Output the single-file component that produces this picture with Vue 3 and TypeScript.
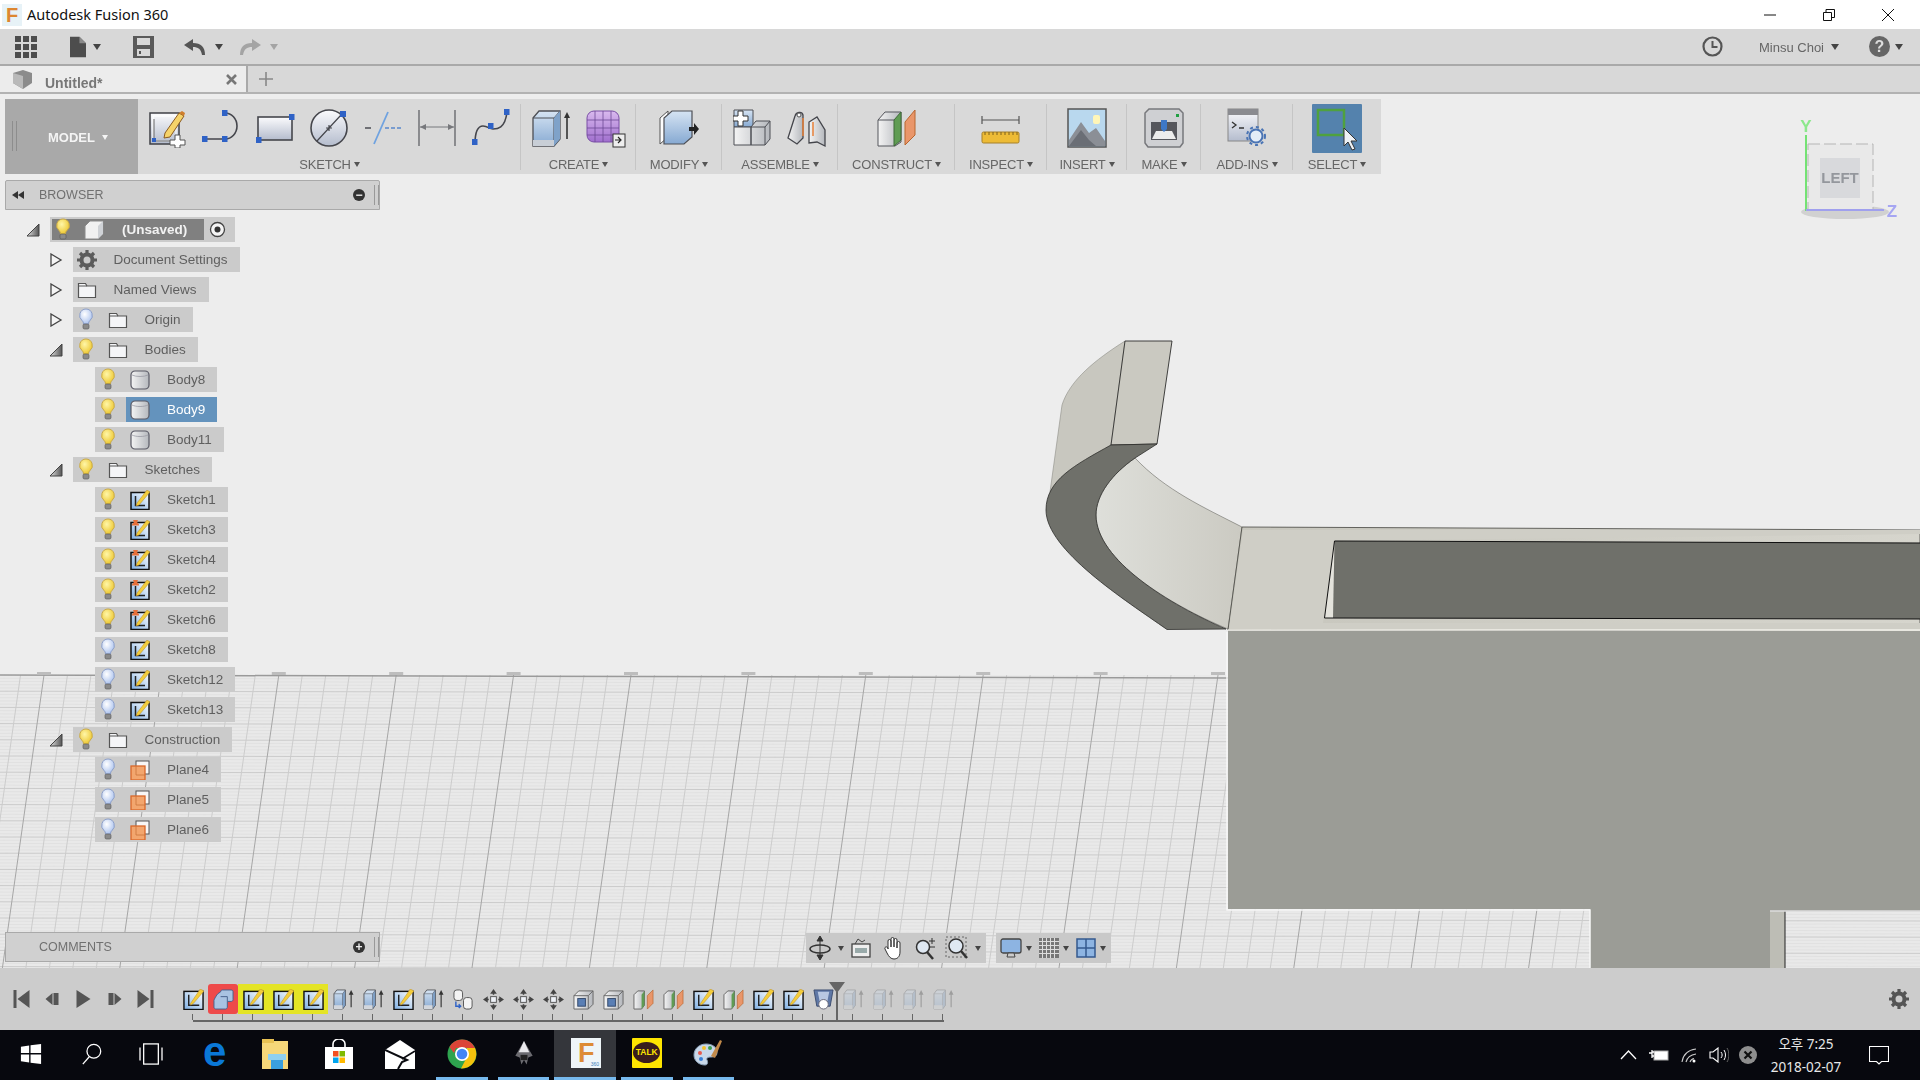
<script setup lang="ts">
interface TreeRow {
  label: string
  level: number
  arrow?: 'open' | 'closed'
  bulb?: 'on' | 'off'
  icon: string
  selected?: boolean
}

const tree: TreeRow[] = [
  { label: 'Document Settings', level: 1, arrow: 'closed', icon: 'n-gear' },
  { label: 'Named Views', level: 1, arrow: 'closed', icon: 'n-folder' },
  { label: 'Origin', level: 1, arrow: 'closed', bulb: 'off', icon: 'n-folder' },
  { label: 'Bodies', level: 1, arrow: 'open', bulb: 'on', icon: 'n-folder' },
  { label: 'Body8', level: 2, bulb: 'on', icon: 'n-body' },
  { label: 'Body9', level: 2, bulb: 'on', icon: 'n-body', selected: true },
  { label: 'Body11', level: 2, bulb: 'on', icon: 'n-body' },
  { label: 'Sketches', level: 1, arrow: 'open', bulb: 'on', icon: 'n-folder' },
  { label: 'Sketch1', level: 2, bulb: 'on', icon: 'n-sketch' },
  { label: 'Sketch3', level: 2, bulb: 'on', icon: 'n-sketch-warn' },
  { label: 'Sketch4', level: 2, bulb: 'on', icon: 'n-sketch-warn' },
  { label: 'Sketch2', level: 2, bulb: 'on', icon: 'n-sketch-warn' },
  { label: 'Sketch6', level: 2, bulb: 'on', icon: 'n-sketch-warn' },
  { label: 'Sketch8', level: 2, bulb: 'off', icon: 'n-sketch' },
  { label: 'Sketch12', level: 2, bulb: 'off', icon: 'n-sketch' },
  { label: 'Sketch13', level: 2, bulb: 'off', icon: 'n-sketch' },
  { label: 'Construction', level: 1, arrow: 'open', bulb: 'on', icon: 'n-folder' },
  { label: 'Plane4', level: 2, bulb: 'off', icon: 'n-plane' },
  { label: 'Plane5', level: 2, bulb: 'off', icon: 'n-plane' },
  { label: 'Plane6', level: 2, bulb: 'off', icon: 'n-plane' }
]

const ribbon = [
  { label: 'SKETCH', width: 383, icons: ['r-sketch', 'r-arc', 'r-rect', 'r-circle', 'r-trim', 'r-dim', 'r-spline'] },
  { label: 'CREATE', width: 115, icons: ['r-extrude', 'r-form'] },
  { label: 'MODIFY', width: 86, icons: ['r-press'] },
  { label: 'ASSEMBLE', width: 116, icons: ['r-component', 'r-joint'] },
  { label: 'CONSTRUCT', width: 117, icons: ['r-construct'] },
  { label: 'INSPECT', width: 92, icons: ['r-measure'] },
  { label: 'INSERT', width: 80, icons: ['r-insert'] },
  { label: 'MAKE', width: 74, icons: ['r-make'] },
  { label: 'ADD-INS', width: 92, icons: ['r-addins'] }
]

const timeline = [
  { icon: 't-sketch' },
  { icon: 't-copy', mark: 'red' },
  { icon: 't-sketch', mark: 'yellow' },
  { icon: 't-sketch', mark: 'yellow' },
  { icon: 't-sketch', mark: 'yellow' },
  { icon: 't-extrude' },
  { icon: 't-extrude' },
  { icon: 't-sketch' },
  { icon: 't-extrude' },
  { icon: 't-joint' },
  { icon: 't-move' },
  { icon: 't-move' },
  { icon: 't-move' },
  { icon: 't-box' },
  { icon: 't-box' },
  { icon: 't-plane' },
  { icon: 't-plane' },
  { icon: 't-sketch' },
  { icon: 't-plane' },
  { icon: 't-sketch' },
  { icon: 't-sketch' },
  { icon: 't-shield' },
  { icon: 't-extrude', ghost: true },
  { icon: 't-extrude', ghost: true },
  { icon: 't-extrude', ghost: true },
  { icon: 't-extrude', ghost: true }
]

const taskButtons = [
  { icon: 'b-win' },
  { icon: 'b-search' },
  { icon: 'b-task' },
  { icon: 'b-edge' },
  { icon: 'b-files' },
  { icon: 'b-store' },
  { icon: 'b-mail' },
  { icon: 'b-chrome', open: true },
  { icon: 'b-ink', open: true },
  { icon: 'b-fusion', open: true, active: true },
  { icon: 'b-talk', open: true },
  { icon: 'b-paint', open: true }
]

// ground grid, leaning towards the left as it gets nearer
const horizon = 675
const bottom = 968
const lean = 0.142
const gridV: { x1: number; x2: number; major: boolean }[] = []
for (let i = -5; i < 75; i++) {
  const x = 44 + i * 23.48
  gridV.push({ x1: x, x2: x - (bottom - horizon) * lean, major: i % 5 === 0 })
}
const gridH: { y: number; major: boolean }[] = []
for (let i = 1; i * 3.24 < bottom - horizon; i++) {
  gridH.push({ y: horizon + i * 3.24, major: i % 5 === 0 })
}
const ticks = Array.from({ length: 11 }, (_, i) => 44 + i * 117.4)
</script>

<template>
  <div class="app">
    <svg class="defs" aria-hidden="true">
      <defs>
        <linearGradient id="gBlue" x1="0" y1="0" x2="0" y2="1"><stop offset="0" stop-color="#d6e4f3" /><stop offset="1" stop-color="#86a9d2" /></linearGradient>
        <linearGradient id="gSheet" x1="0" y1="0" x2="0" y2="1"><stop offset="0" stop-color="#fbfbfd" /><stop offset="1" stop-color="#b4bccd" /></linearGradient>
        <linearGradient id="gSky" x1="1" y1="0" x2="0" y2="1"><stop offset="0" stop-color="#ffffff" /><stop offset="1" stop-color="#7fb0e4" /></linearGradient>
        <linearGradient id="gPurple" x1="0" y1="0" x2="0" y2="1"><stop offset="0" stop-color="#d9b9ee" /><stop offset="1" stop-color="#a06fce" /></linearGradient>
        <linearGradient id="gGrey" x1="0" y1="0" x2="1" y2="0"><stop offset="0" stop-color="#f4f4f4" /><stop offset="1" stop-color="#b5b8bd" /></linearGradient>
        <linearGradient id="gTri" x1="0" y1="0" x2="1" y2="0"><stop offset="0" stop-color="#e0e0e0" /><stop offset="1" stop-color="#555" /></linearGradient>
        <radialGradient id="gOn" cx="0.4" cy="0.35" r="0.7"><stop offset="0" stop-color="#fff6a8" /><stop offset="1" stop-color="#ecc52a" /></radialGradient>
        <radialGradient id="gOff" cx="0.4" cy="0.35" r="0.7"><stop offset="0" stop-color="#ffffff" /><stop offset="1" stop-color="#a8c0ee" /></radialGradient>
        <linearGradient id="gFace" x1="0" y1="0" x2="1" y2="0"><stop offset="0" stop-color="#c7c6bd" /><stop offset="1" stop-color="#d6d5cd" /></linearGradient>
        <linearGradient id="gInner" x1="0" y1="0" x2="1" y2="0"><stop offset="0" stop-color="#dedfda" /><stop offset="1" stop-color="#cbcac2" /></linearGradient>
      </defs>

      <!-- tree icons -->
      <symbol id="n-bulb-on" viewBox="0 0 20 24">
        <path d="M10 1a6.5 6.5 0 0 0-4 11.500c1 1 1.500 2 1.500 3.500h5c0-1.500.5-2.500 1.500-3.500A6.500 6.500 0 0 0 10 1z" fill="url(#gOn)" stroke="#c8a94a" />
        <rect x="7" y="16" width="6" height="5" rx="1.500" fill="#8a8a8a" stroke="#555" stroke-width=".6" />
      </symbol>
      <symbol id="n-bulb-off" viewBox="0 0 20 24">
        <path d="M10 1a6.5 6.5 0 0 0-4 11.500c1 1 1.500 2 1.500 3.500h5c0-1.500.5-2.500 1.500-3.500A6.500 6.500 0 0 0 10 1z" fill="url(#gOff)" stroke="#8c9fc9" />
        <rect x="7" y="16" width="6" height="5" rx="1.500" fill="#8a8a8a" stroke="#555" stroke-width=".6" />
      </symbol>
      <symbol id="n-folder" viewBox="0 0 20 20">
        <path d="M1.500 3.500h7l1.500 2.500h8.500v11.500h-17z" fill="#f4f5f7" stroke="#555" stroke-width="1.200" />
        <path d="M1.500 6h8.500" stroke="#555" stroke-width="1" />
      </symbol>
      <symbol id="n-gear" viewBox="0 0 20 20">
        <circle cx="10" cy="10" r="5.500" fill="none" stroke="#5c5c5c" stroke-width="4" />
        <path d="M10 0v4M10 16v4M0 10h4M16 10h4M3 3l3 3M14 14l3 3M17 3l-3 3M6 14l-3 3" stroke="#5c5c5c" stroke-width="3.200" />
      </symbol>
      <symbol id="n-cube" viewBox="0 0 20 20">
        <path d="M1 6l5-5h13v13l-5 5H1z" fill="#f1f1f1" stroke="#8a8a8a" />
        <path d="M14 6v13l5-5V1z" fill="#cfd2d6" />
      </symbol>
      <symbol id="n-body" viewBox="0 0 20 20">
        <rect x="1" y="1" width="18" height="18" rx="4" fill="url(#gGrey)" stroke="#5a5a66" stroke-width="1.200" />
        <path d="M2 5c4 2 12 2 16 0" fill="none" stroke="#9a9aa4" stroke-width=".8" />
      </symbol>
      <symbol id="n-sketch" viewBox="0 0 20 20">
        <rect x="1" y="2.500" width="18" height="17" fill="url(#gSky)" stroke="#111" stroke-width="1.500" />
        <path d="M5.500 6v9.500H15" fill="none" stroke="#222" stroke-width="1.500" />
        <path d="M7 13L17 0l3 2-11 13-3 1z" fill="#f3cd3c" stroke="#b98a25" stroke-width=".5" />
      </symbol>
      <symbol id="n-sketch-warn" viewBox="0 0 20 20">
        <rect x="1" y="2.500" width="18" height="17" fill="url(#gSky)" stroke="#111" stroke-width="1.500" />
        <path d="M5.500 6v9.500H15" fill="none" stroke="#222" stroke-width="1.500" />
        <path d="M7 13L17 0l3 2-11 13-3 1z" fill="#f3cd3c" stroke="#b98a25" stroke-width=".5" />
        <path d="M3 0h5l-1 2 2 2.500v1H2v-1L4 2z" fill="#e8703a" />
      </symbol>
      <symbol id="n-plane" viewBox="0 0 20 20">
        <rect x="6" y="1" width="13" height="13" fill="#f7f7f7" stroke="#555" stroke-width="1" />
        <rect x="1" y="6" width="14" height="14" fill="#f2a66e" stroke="#d9682a" stroke-width="1.300" />
        <path d="M6 6v9h9" fill="none" stroke="#c9733a" stroke-width=".8" />
      </symbol>

      <!-- ribbon icons -->
      <symbol id="r-sketch" viewBox="0 0 40 40">
        <rect x="2" y="5" width="29" height="31" fill="url(#gSheet)" stroke="#3f4046" stroke-width="1.500" />
        <rect x="5" y="8" width="23" height="25" fill="none" stroke="#fff" />
        <path d="M6 11v22h20" fill="none" stroke="#666" />
        <path d="M17 25l14-20 5 3-14 21-6 1z" fill="#f6d36a" stroke="#8a5a20" />
        <path d="M31 5l5 3 1-3-3-2z" fill="#cf7e2c" />
        <rect x="4" y="30" width="4" height="4" fill="#2f62c6" />
        <path d="M27 27h5v5h5v5h-5v3h-5v-3h-5v-5h5z" fill="#fff" stroke="#555" />
      </symbol>
      <symbol id="r-arc" viewBox="0 0 40 40">
        <path d="M3 31h20a12 13 0 0 0 0-26" fill="none" stroke="#45464c" stroke-width="1.600" />
        <rect x="0" y="28" width="5.500" height="6" fill="#2f62c6" /><rect x="20" y="28" width="5.500" height="6" fill="#2f62c6" /><rect x="20" y="2" width="5.500" height="6" fill="#2f62c6" />
      </symbol>
      <symbol id="r-rect" viewBox="0 0 40 40">
        <rect x="2" y="9" width="34" height="23" fill="url(#gSheet)" stroke="#45464c" stroke-width="1.600" />
        <rect x="0" y="29" width="5.500" height="6" fill="#2f62c6" /><rect x="33" y="6" width="5.500" height="6" fill="#2f62c6" />
      </symbol>
      <symbol id="r-circle" viewBox="0 0 40 40">
        <circle cx="19" cy="20" r="18" fill="url(#gSheet)" stroke="#45464c" stroke-width="1.600" />
        <path d="M7 33L31 7M16 20h6M19 17v6" stroke="#45464c" stroke-width="1.200" />
        <rect x="30" y="3" width="6" height="6" fill="#2f62c6" />
      </symbol>
      <symbol id="r-trim" viewBox="0 0 40 40">
        <path d="M1 20h6" stroke="#55565c" stroke-width="1.600" />
        <path d="M10 36L24 4" stroke="#6fa2e0" stroke-width="1.800" />
        <path d="M21 20h17" stroke="#5a88cc" stroke-width="1.600" stroke-dasharray="4 2" />
      </symbol>
      <symbol id="r-dim" viewBox="0 0 40 40">
        <path d="M1 2v36M37 2v36" stroke="#77787c" stroke-width="1.600" />
        <path d="M2 19h34" stroke="#77787c" />
        <path d="M2 19l6-3v6zM36 19l-6-3v6z" fill="#77787c" />
      </symbol>
      <symbol id="r-spline" viewBox="0 0 40 40">
        <path d="M3 36c0-12 3-18 8-18s6 3 10 3 12 0 14-17" fill="none" stroke="#45464c" stroke-width="1.600" />
        <rect x="0" y="31" width="5.500" height="6" fill="#2f62c6" /><rect x="16" y="15" width="5.500" height="6" fill="#2f62c6" /><rect x="32" y="1" width="5.500" height="6" fill="#2f62c6" />
      </symbol>
      <symbol id="r-extrude" viewBox="0 0 40 40">
        <path d="M1 10l6-7h21v28l-6 7H1z" fill="url(#gBlue)" stroke="#4d4f55" stroke-width="1.300" />
        <path d="M1 10h21v28M22 10l6-7" fill="none" stroke="#4d4f55" stroke-width="1" />
        <path d="M22 10l6-7v28l-6 7z" fill="#7fa2c9" />
        <path d="M1 32h21v6H1z" fill="#c8ced6" />
        <path d="M35 31V8" stroke="#333" stroke-width="1.600" /><path d="M35 4l-3 6h6z" fill="#333" />
      </symbol>
      <symbol id="r-form" viewBox="0 0 40 40">
        <rect x="1" y="3" width="32" height="31" rx="7" fill="url(#gPurple)" stroke="#7a4fa6" />
        <path d="M1 12h32M1 20h32M1 27h32M9 3v31M17 3v31M25 3v31" stroke="#6d4a94" stroke-width=".8" />
        <rect x="27" y="26" width="12" height="13" fill="#eee" stroke="#333" />
        <path d="M29 32h5M32 29l3 3-3 3" fill="none" stroke="#222" stroke-width="1.200" />
      </symbol>
      <symbol id="r-press" viewBox="0 0 40 40">
        <path d="M1 36V10l8-7v26z" fill="#fdfdfd" stroke="#555" />
        <path d="M5 36V10l8-7h20v26l-8 7z" fill="url(#gBlue)" stroke="#4d4f55" stroke-width="1.200" />
        <path d="M30 19h5v-4l5 6-5 6v-4h-5z" fill="#222" />
      </symbol>
      <symbol id="r-component" viewBox="0 0 40 40">
        <path d="M1 2h19v17H1z" fill="url(#gBlue)" stroke="#4d4f55" />
        <path d="M5 3h5v5h5v5h-5v5H5v-5H0V8h5z" fill="#fff" stroke="#333" />
        <path d="M1 19h17v18H1zM18 19l5-6h14v18l-5 6H18z" fill="url(#gGrey)" stroke="#4d4f55" />
        <path d="M18 19h14v18M32 19l5-6" fill="none" stroke="#4d4f55" />
      </symbol>
      <symbol id="r-joint" viewBox="0 0 40 40">
        <path d="M1 30L8 8c1-4 7-5 8-1v23l-6 6z" fill="url(#gGrey)" stroke="#44454b" stroke-width="1.300" />
        <path d="M22 35V14l8-5 8 13v16l-8-4z" fill="url(#gGrey)" stroke="#44454b" stroke-width="1.300" />
        <path d="M16 28V10M26 14v14" stroke="#e8813a" stroke-width="1.500" />
        <circle cx="12" cy="7" r="2" fill="#fff" stroke="#555" />
      </symbol>
      <symbol id="r-construct" viewBox="0 0 40 40">
        <path d="M1 12l7-8h16v30l-6 4H1z" fill="url(#gGrey)" stroke="#55565c" />
        <path d="M17 12l7-8v28l-7 6z" fill="#5f9c53" stroke="#3e6a38" />
        <path d="M1 12h16" stroke="#55565c" />
        <path d="M28 37L38 27V2L28 14z" fill="#e9966a" stroke="#b8662f" />
      </symbol>
      <symbol id="r-measure" viewBox="0 0 40 40">
        <path d="M1 12h37M1 8v8M38 8v8" fill="none" stroke="#555" stroke-width="1.200" />
        <rect x="1" y="24" width="37" height="11" rx="1.500" fill="#edbb36" stroke="#a5802a" />
        <path d="M4 24v3M8 24v3M12 24v3M16 24v3M20 24v3M24 24v3M28 24v3M32 24v3M36 24v3" stroke="#7d611d" />
      </symbol>
      <symbol id="r-insert" viewBox="0 0 40 40">
        <rect x="1" y="1" width="38" height="38" fill="#b9d8ee" stroke="#555" stroke-width="1.500" />
        <rect x="26" y="7" width="7" height="9" rx="2" fill="#fff6b8" />
        <path d="M2 38V32l12-18 8 11 7-5 9 13v5z" fill="#8b8f96" />
        <path d="M2 38l12-16 8 10 7 6z" fill="#6a6e75" />
      </symbol>
      <symbol id="r-make" viewBox="0 0 40 40">
        <path d="M5 1h30l4 4v30l-3 4H4l-3-4V5z" fill="#cfd0d3" stroke="#77787c" stroke-width="1.500" />
        <rect x="7" y="14" width="26" height="18" fill="#55565c" />
        <path d="M8 31l4-8h16l4 8z" fill="#ececec" />
        <path d="M17 12h6v9l-3 3-3-3z" fill="#3d78c8" />
        <rect x="32" y="6" width="3" height="3" fill="#21a043" />
      </symbol>
      <symbol id="r-addins" viewBox="0 0 40 40">
        <rect x="1" y="1" width="30" height="32" fill="url(#gSheet)" stroke="#888" />
        <rect x="1" y="1" width="30" height="6" fill="#8a8b90" />
        <path d="M5 14l4 3-4 3M12 20h5" fill="none" stroke="#333" stroke-width="1.300" />
        <circle cx="29" cy="28" r="6.500" fill="#e4edf7" stroke="#4a74b4" stroke-width="2" />
        <circle cx="29" cy="28" r="9" fill="none" stroke="#4a74b4" stroke-width="2" stroke-dasharray="3 3" />
      </symbol>
      <symbol id="r-select" viewBox="0 0 50 49">
        <rect x="0" y="0" width="50" height="49" rx="1" fill="#5482ad" />
        <rect x="6" y="6" width="26" height="25" fill="none" stroke="#4fa13f" stroke-width="2.500" />
        <path d="M32 24v18l4-4 4 8 3-1-4-8h6z" fill="#eef2f6" stroke="#333" />
      </symbol>

      <!-- timeline icons -->
      <symbol id="t-sketch" viewBox="0 0 22 22">
        <rect x="1" y="2.500" width="20" height="19" fill="url(#gSky)" stroke="#111" stroke-width="1.500" />
        <path d="M6 6v11h11" fill="none" stroke="#222" stroke-width="1.500" />
        <path d="M8 15L18 0l4 2-11 13-3 2z" fill="#f3cd3c" stroke="#b98a25" stroke-width=".5" />
      </symbol>
      <symbol id="t-copy" viewBox="0 0 22 22">
        <path d="M8 3c0-1.500 1-2 2-2h9c1.500 0 2 1 2 2v8c0 1.500-1 2-2 2h-4v6c0 1-1 2-2 2H3c-1 0-2-1-2-2v-7c0-1 3-6 4-7z" fill="#a9c3e2" stroke="#46618c" />
        <path d="M8 8h7v5" fill="none" stroke="#46618c" />
      </symbol>
      <symbol id="t-extrude" viewBox="0 0 22 22">
        <path d="M1 5l3-4h9v16l-3 4H1z" fill="url(#gBlue)" stroke="#5a5c62" />
        <path d="M10 5l3-4v16l-3 4zM1 5h9" fill="#7fa2c9" stroke="#5a5c62" stroke-width=".6" />
        <path d="M1 17h9v4H1z" fill="#d2d6dc" />
        <path d="M19 19V5" stroke="#333" stroke-width="1.200" /><path d="M19 1l-2.500 5h5z" fill="#333" />
      </symbol>
      <symbol id="t-joint" viewBox="0 0 22 22">
        <rect x="1" y="1" width="9" height="11" rx="3" fill="#f4f4f4" stroke="#555" />
        <rect x="11" y="9" width="9" height="12" rx="3" fill="#f4f4f4" stroke="#555" />
        <path d="M3 13v5h5M6 16l2 2-2 2" fill="none" stroke="#2f62c6" stroke-width="1.500" />
      </symbol>
      <symbol id="t-move" viewBox="0 0 22 22">
        <path d="M11 4v2M11 16v2M4 11h2M16 11h2" stroke="#444" stroke-width="1.500" />
        <path d="M11 0L7.500 5h7zM11 22l-3.500-5h7zM0 11l5-3.500v7zM22 11l-5-3.500v7z" fill="#444" />
        <rect x="8" y="8" width="6" height="6" fill="#eef2f8" stroke="#555" />
      </symbol>
      <symbol id="t-box" viewBox="0 0 22 22">
        <path d="M1 7l5-5h15v14l-5 5H1z" fill="url(#gGrey)" stroke="#666" />
        <path d="M1 7h15v14M16 7l5-5" fill="none" stroke="#666" />
        <rect x="5" y="10" width="8" height="8" fill="#5a7fb5" stroke="#33496c" />
      </symbol>
      <symbol id="t-plane" viewBox="0 0 22 22">
        <path d="M1 6l4-4h7v15l-3 4H1z" fill="url(#gGrey)" stroke="#666" />
        <path d="M9 6l3-4v15l-3 4z" fill="#5f9c53" />
        <path d="M15 21l6-6V1l-6 6z" fill="#e9966a" stroke="#b8662f" stroke-width=".7" />
      </symbol>
      <symbol id="t-shield" viewBox="0 0 22 22">
        <path d="M1 1h20l-3 17H4z" fill="#5f78a6" stroke="#3d4e70" />
        <path d="M5 3h12l-2 10H7z" fill="#b9c8e2" />
        <circle cx="11" cy="16" r="5" fill="#fff" stroke="#667" />
      </symbol>

      <!-- taskbar icons -->
      <symbol id="b-win" viewBox="0 0 24 24">
        <path d="M1 4l9-1.300V11H1zM11.500 2.500L23 1v10H11.500zM1 12.500h9v8.800l-9-1.300zM11.500 12.500H23V23l-11.500-1.500z" fill="#fff" />
      </symbol>
      <symbol id="b-search" viewBox="0 0 24 24">
        <circle cx="14" cy="9" r="7.500" fill="none" stroke="#fff" stroke-width="1.400" /><path d="M9 15L2 23" stroke="#fff" stroke-width="1.400" />
      </symbol>
      <symbol id="b-task" viewBox="0 0 26 24">
        <rect x="5" y="1" width="16" height="22" fill="none" stroke="#fff" stroke-width="1.400" /><path d="M1 5v14M25 5v14" stroke="#fff" stroke-width="1.400" />
      </symbol>
      <symbol id="b-files" viewBox="0 0 30 30">
        <path d="M0 0h8l3 2h15v28H0z" fill="#f6d779" />
        <path d="M0 0h12v4H0z" fill="#e8c152" />
        <rect x="9" y="20" width="12" height="10" fill="#3aa0dd" /><rect x="6" y="15" width="18" height="6" fill="#8fd0f0" />
      </symbol>
      <symbol id="b-store" viewBox="0 0 30 30">
        <path d="M1 8h28v22H1z" fill="#fff" /><path d="M9 9V5a6 5 0 0 1 12 0v4" fill="none" stroke="#fff" stroke-width="1.600" />
        <rect x="9" y="12" width="5.500" height="5.500" fill="#f25022" /><rect x="15.500" y="12" width="5.500" height="5.500" fill="#7fba00" />
        <rect x="9" y="18.500" width="5.500" height="5.500" fill="#00a4ef" /><rect x="15.500" y="18.500" width="5.500" height="5.500" fill="#ffb900" />
      </symbol>
      <symbol id="b-mail" viewBox="0 0 30 30">
        <path d="M0 11L15 1l15 10v19H0z" fill="#fff" /><path d="M0 11l22 10-5 2-4 7" fill="none" stroke="#0a0b10" stroke-width="2" />
        <path d="M30 12L17 20" stroke="#0a0b10" stroke-width="1.500" />
      </symbol>
      <symbol id="b-chrome" viewBox="0 0 30 30">
        <circle cx="15" cy="15" r="14.500" fill="#2ea44f" />
        <path d="M15 .5a14.500 14.500 0 0 1 13 8.500H15z M2.500 8A14.500 14.500 0 0 1 15 .5V9H9l-2 5z" fill="#db4437" />
        <path d="M28 9a14.500 14.500 0 0 1-14 20.500L20 18V9z" fill="#f4c20d" />
        <circle cx="15" cy="15" r="7" fill="#fff" /><circle cx="15" cy="15" r="5.300" fill="#4285f4" />
      </symbol>
      <symbol id="b-ink" viewBox="0 0 26 30">
        <path d="M13 0l10 17-5 2-2 8-3-5-3 5-2-8-5-2z" fill="#6b6b70" /><path d="M13 0l6 13H7z" fill="#e9e9ec" />
        <path d="M9 16h8v6H9z" fill="#222" />
      </symbol>
      <symbol id="b-paint" viewBox="0 0 30 30">
        <path d="M13 5c-7 0-12 5-12 11s5 10 11 10c3 0 3-3 2-5s1-3 4-3c4 0 6-1 6-5 0-5-5-8-11-8z" fill="#c8d8ea" stroke="#8aa0b8" />
        <circle cx="7" cy="14" r="2" fill="#e85a4f" /><circle cx="11" cy="9" r="2" fill="#f2c230" /><circle cx="17" cy="9" r="2" fill="#3d9f53" /><circle cx="8" cy="20" r="2" fill="#3a7fd5" />
        <path d="M18 17L27 1l2 1-7 17z" fill="#c28a4a" />
      </symbol>
    </svg>

    <header class="title-bar">
      <span class="app-logo">F</span>
      <span class="app-name">Autodesk Fusion 360</span>
      <div class="win-controls">
        <svg width="14" height="14" viewBox="0 0 14 14"><path d="M1 7h12" stroke="#111" /></svg>
        <svg width="14" height="14" viewBox="0 0 14 14"><path d="M1.500 4.500h8v8h-8zM4 4.500v-3h8.500v8h-3" fill="none" stroke="#111" /></svg>
        <svg width="14" height="14" viewBox="0 0 14 14"><path d="M1 1l12 12M13 1L1 13" stroke="#111" /></svg>
      </div>
    </header>

    <div class="quick-bar">
      <svg width="22" height="22" viewBox="0 0 22 22"><path d="M0 0h6v6H0zM8 0h6v6H8zM16 0h6v6h-6zM0 8h6v6H0zM8 8h6v6H8zM16 8h6v6h-6zM0 16h6v6H0zM8 16h6v6H8zM16 16h6v6h-6z" fill="#4d4d4d" /></svg>
      <svg class="qb-doc" width="16" height="22" viewBox="0 0 17 22"><path d="M0 0h10l7 7v15H0z" fill="#4d4d4d" /><path d="M10 0v7h7" fill="#8a8a8a" /></svg>
      <i class="caret dark qb-c1"></i>
      <svg class="qb-save" width="21" height="22" viewBox="0 0 21 22"><path d="M0 0h21v22H0z" fill="#5a5a5a" /><rect x="4" y="2" width="13" height="7" fill="#d8d8d8" /><rect x="4" y="13" width="13" height="7" fill="#d8d8d8" /><rect x="6" y="15" width="2" height="3" fill="#555" /></svg>
      <svg class="qb-undo" width="21" height="16" viewBox="0 0 21 16"><path d="M9 0L0 6l9 6V8c5 0 8 2 9 8h3c0-8-4-12-12-12z" fill="#555" /></svg>
      <i class="caret dark qb-c2"></i>
      <svg class="qb-redo" width="21" height="16" viewBox="0 0 21 16"><path d="M12 0l9 6-9 6V8c-5 0-8 2-9 8H0c0-8 4-12 12-12z" fill="#a4a4a4" /></svg>
      <i class="caret light qb-c3"></i>
      <div class="qb-right">
        <svg width="21" height="21" viewBox="0 0 21 21"><circle cx="10.500" cy="10.500" r="9" fill="none" stroke="#555" stroke-width="2.200" /><path d="M10.500 5v6h5" fill="none" stroke="#555" stroke-width="2" /></svg>
        <span class="user">Minsu Choi</span>
        <i class="caret dark qb-c4"></i>
        <span class="help">?</span>
        <i class="caret dark qb-c5"></i>
      </div>
    </div>

    <div class="tab-bar">
      <div class="tab">
        <svg width="21" height="20" viewBox="0 0 21 20"><path d="M1 4l10-3 9 3v10l-9 6-10-6z" fill="#8b8b8b" /><path d="M1 4l10 3v13l-10-6z" fill="#b9b9b9" /></svg>
        <span class="tab-name">Untitled*</span>
        <svg class="tab-close" width="11" height="11" viewBox="0 0 11 11"><path d="M1 1l9 9M10 1l-9 9" stroke="#777" stroke-width="2.600" /></svg>
      </div>
      <svg class="tab-plus" width="16" height="16" viewBox="0 0 16 16"><path d="M8 1v14M1 8h14" stroke="#888" stroke-width="1.600" /></svg>
    </div>

    <main class="canvas">
      <svg class="scene" viewBox="0 94 1920 874" width="1920" height="874">
        <rect x="0" :y="horizon" width="1920" :height="bottom - horizon" fill="#e9e9e9" />
        <g>
          <line v-for="(l, i) in gridH" :key="'h' + i" x1="0" :y1="l.y" x2="1920" :y2="l.y + 3" :stroke="l.major ? '#cbcbcb' : '#e1e1e1'" stroke-width="1" />
          <line v-for="(l, i) in gridV" :key="'v' + i" :x1="l.x1" :y1="horizon" :x2="l.x2" :y2="bottom" :stroke="l.major ? '#a6a6a6' : '#cccccc'" stroke-width="1" />
          <line x1="0" :y1="horizon" x2="1228" :y2="horizon + 3" stroke="#9a9a9a" stroke-width="1.500" />
          <rect v-for="t in ticks" :key="t" :x="t - 7" :y="horizon - 3" width="14" height="3" fill="#bdbdbd" />
        </g>

        <!-- the body -->
        <path d="M1125 341C1095 360 1070 380 1062 405L1050 492L1111 445Z" fill="#c8c7bf" stroke="#8d8d86" stroke-width=".6" />
        <path d="M1125 341H1172L1157 444L1111 445Z" fill="#cac9c1" stroke="#2e2e2c" stroke-width=".9" />
        <path d="M1135 458C1165 490 1205 508 1242 527L1228 629C1170 605 1096 560 1096 515C1096 495 1112 474 1135 458Z" fill="url(#gInner)" stroke="#55554f" stroke-width=".5" />
        <path d="M1111 445L1157 444L1135 458C1112 474 1096 495 1096 515C1096 560 1170 605 1226 629L1167 629.500C1125 600 1046 550 1046 510C1046 480 1075 465 1111 445Z" fill="#6f706a" stroke="#2e2e2c" stroke-width=".8" />
        <path d="M1242 527L1920 530V631L1228 630Z" fill="url(#gFace)" stroke="#44443f" stroke-width=".8" />
        <path d="M1243 530H1920V534L1334 541L1323 623H1920V631L1229 629Z" fill="#cfcec6" />
        <path d="M1334.500 541L1324.500 618H1340V541Z" fill="#e4e3dc" />
        <path d="M1334.500 541L1920 543V619L1333 618Z" fill="#6f706a" />
        <path d="M1334.500 541L1920 543M1324.500 618L1920 619M1334.500 541L1324.500 618" fill="none" stroke="#111" stroke-width="1" />
        <path d="M1228 631H1920V911H1770V968H1590V909H1228Z" fill="#9b9c96" />
        <path d="M1228 630H1920" stroke="#f2f1ea" stroke-width="1.500" />
        <path d="M1227 632V910H1590V968" fill="none" stroke="#f7f7f7" stroke-width="1.500" />
        <rect x="1770" y="911" width="15" height="57" fill="#bdbdb5" />
        <path d="M1785 911V968" stroke="#222" stroke-width="1" />
        <path d="M1770 911H1920" stroke="#dcdcdc" stroke-width="1.500" />

        <!-- view cube -->
        <ellipse cx="1845" cy="212" rx="44" ry="7" fill="#c4c4c4" opacity=".7" />
        <rect x="1808" y="144" width="65" height="66" fill="#e9e9e9" stroke="#b5b5b5" stroke-dasharray="12 4" />
        <rect x="1820" y="158" width="40" height="40" fill="#d8d9dc" />
        <text x="1840" y="183" text-anchor="middle" class="cube-left">LEFT</text>
        <path d="M1806 135V211" stroke="#74e274" stroke-width="2" />
        <path d="M1806 210H1884" stroke="#a0a0ee" stroke-width="2" />
        <text x="1806" y="132" text-anchor="middle" class="axis" fill="#8ce88c">Y</text>
        <text x="1892" y="217" text-anchor="middle" class="axis" fill="#a6a6f2">Z</text>
      </svg>

      <section class="ribbon">
        <div class="model-btn">
          <i class="grip"></i>
          <span>MODEL</span>
          <i class="caret white"></i>
        </div>
        <div v-for="g in ribbon" :key="g.label" class="rb-group" :style="{ width: g.width + 'px' }">
          <div class="rb-icons">
            <svg v-for="(ic, i) in g.icons" :key="i" class="rb-icon"><use :href="'#' + ic" /></svg>
          </div>
          <div class="rb-label">{{ g.label }}<i class="caret dark"></i></div>
        </div>
        <div class="rb-group last">
          <div class="rb-icons select">
            <svg class="rb-select"><use href="#r-select" /></svg>
          </div>
          <div class="rb-label">SELECT<i class="caret dark"></i></div>
        </div>
      </section>

      <section class="panel browser">
        <svg width="12" height="8" viewBox="0 0 12 8"><path d="M6 0L0 4l6 4zM12 0L6 4l6 4z" fill="#333" /></svg>
        <span class="panel-name">BROWSER</span>
        <span class="panel-btn">&minus;</span>
        <i class="panel-grip"></i>
      </section>

      <section class="tree">
        <div class="row">
          <svg class="arrow" width="14" height="14" viewBox="0 0 14 14"><path d="M1 13L13 1v12z" fill="url(#gTri)" stroke="#444" /></svg>
          <div class="chip root">
            <div class="root-dark">
              <svg class="bulb"><use href="#n-bulb-on" /></svg>
              <svg class="node-icon"><use href="#n-cube" /></svg>
              <span class="root-name">(Unsaved)</span>
            </div>
            <svg class="radio" width="17" height="17" viewBox="0 0 17 17"><circle cx="8.500" cy="8.500" r="7" fill="#f4f4f4" stroke="#444" stroke-width="1.300" /><circle cx="8.500" cy="8.500" r="3" fill="#333" /></svg>
          </div>
        </div>
        <div v-for="r in tree" :key="r.label" class="row" :style="{ paddingLeft: r.level * 22.5 + 'px' }">
          <div class="arrow-slot">
            <svg v-if="r.arrow === 'open'" class="arrow" width="14" height="14" viewBox="0 0 14 14"><path d="M1 13L13 1v12z" fill="url(#gTri)" stroke="#444" /></svg>
            <svg v-else-if="r.arrow === 'closed'" class="arrow" width="14" height="14" viewBox="0 0 14 14"><path d="M2 1l10 6-10 6z" fill="#f4f4f4" stroke="#444" stroke-width="1.300" /></svg>
          </div>
          <div class="chip" :class="{ 'has-bulb': r.bulb }">
            <svg v-if="r.bulb" class="bulb"><use :href="'#n-bulb-' + r.bulb" /></svg>
            <div class="chip-main" :class="{ selected: r.selected }">
              <svg class="node-icon"><use :href="'#' + r.icon" /></svg>
              <span class="node-name">{{ r.label }}</span>
            </div>
          </div>
        </div>
      </section>

      <section class="panel comments">
        <span class="panel-name">COMMENTS</span>
        <span class="panel-btn">+</span>
        <i class="panel-grip"></i>
      </section>

      <section class="nav-bar">
        <div class="nav-group first">
          <svg width="24" height="24" viewBox="0 0 24 24"><ellipse cx="12" cy="13" rx="10" ry="4" fill="none" stroke="#333" stroke-width="1.500" /><path d="M12 2v20M12 0l-3 5h6zM12 24l-3-5h6z" stroke="#333" fill="#333" /></svg>
          <i class="caret dark"></i>
          <svg class="nav-look" width="20" height="20" viewBox="0 0 20 20"><rect x="1" y="6" width="18" height="13" fill="#eee" stroke="#444" stroke-width="1.300" /><rect x="4" y="10" width="12" height="5" fill="#9aa" /><path d="M4 6l3-5 4 3 3-2" fill="none" stroke="#444" /></svg>
          <svg width="22" height="24" viewBox="0 0 22 24"><path d="M5 13V5a1.500 1.500 0 0 1 3 0v6V3a1.500 1.500 0 0 1 3 0v8V4a1.500 1.500 0 0 1 3 0v8V7a1.500 1.500 0 0 1 3 0v9c0 5-3 7-6 7s-5-2-7-6l-2-4c-1-2 2-3 3-1z" fill="#fff" stroke="#333" /></svg>
          <svg width="22" height="24" viewBox="0 0 22 24"><circle cx="9" cy="11" r="6.500" fill="#dfe8f2" stroke="#333" stroke-width="1.500" /><path d="M13 16l6 7" stroke="#333" stroke-width="2.500" /><path d="M15 5h6M18 2v6M15 11h6" stroke="#333" /></svg>
          <svg width="24" height="24" viewBox="0 0 24 24"><rect x="1" y="1" width="20" height="20" fill="none" stroke="#666" stroke-dasharray="2 2" /><circle cx="11" cy="10" r="7" fill="#dfe8f2" stroke="#333" stroke-width="1.500" /><path d="M16 15l6 7" stroke="#333" stroke-width="2.500" /></svg>
          <i class="caret dark"></i>
        </div>
        <div class="nav-group second">
          <svg width="22" height="20" viewBox="0 0 22 20"><rect x="1" y="1" width="20" height="14" rx="2" fill="#8db4e2" stroke="#444" stroke-width="1.300" /><path d="M7 19h8l-1-4H8z" fill="#ccc" stroke="#444" /></svg>
          <i class="caret dark"></i>
          <svg width="20" height="20" viewBox="0 0 20 20"><rect width="20" height="20" fill="#777" /><path d="M3.500 0v20M7.500 0v20M11.500 0v20M15.500 0v20M0 3.500h20M0 7.500h20M0 11.500h20M0 15.500h20" stroke="#ddd" stroke-width="1" /></svg>
          <i class="caret dark"></i>
          <svg width="20" height="20" viewBox="0 0 20 20"><rect x="1" y="1" width="18" height="18" fill="#8db4e2" stroke="#35598f" stroke-width="1.500" /><path d="M10 1v18M1 10h18" stroke="#35598f" stroke-width="1.500" /></svg>
          <i class="caret dark"></i>
        </div>
      </section>
    </main>

    <footer class="timeline">
      <div class="tl-controls">
        <svg class="tl-btn" viewBox="0 0 16 18"><path d="M0 0h3v18H0zM16 0v18L4 9z" fill="#555" /></svg>
        <svg class="tl-btn" viewBox="0 0 16 18"><path d="M8 3v12L1 9zM9 3h5v12H9z" fill="#555" /></svg>
        <svg class="tl-btn" viewBox="0 0 16 18"><path d="M1 0l14 9-14 9z" fill="#555" /></svg>
        <svg class="tl-btn" viewBox="0 0 16 18"><path d="M8 3v12l7-6zM2 3h5v12H2z" fill="#555" /></svg>
        <svg class="tl-btn" viewBox="0 0 16 18"><path d="M16 0h-3v18h3zM0 0v18l12-9z" fill="#555" /></svg>
      </div>
      <div class="tl-track">
        <div v-for="(t, i) in timeline" :key="i" class="tl-item" :class="[t.mark, { ghost: t.ghost }]">
          <svg class="tl-icon"><use :href="'#' + t.icon" /></svg>
        </div>
        <i class="tl-rail"></i>
        <i class="tl-marker"></i>
      </div>
      <svg class="tl-gear" width="20" height="20" viewBox="0 0 20 20"><circle cx="10" cy="10" r="5.500" fill="none" stroke="#555" stroke-width="4" /><path d="M10 0v4M10 16v4M0 10h4M16 10h4M3 3l3 3M14 14l3 3M17 3l-3 3M6 14l-3 3" stroke="#555" stroke-width="3.200" /></svg>
    </footer>

    <nav class="taskbar">
      <div v-for="b in taskButtons" :key="b.icon" class="task-btn" :class="{ open: b.open, active: b.active }">
        <span v-if="b.icon === 'b-edge'" class="logo-edge">e</span>
        <span v-else-if="b.icon === 'b-fusion'" class="logo-fusion">F<small>360</small></span>
        <span v-else-if="b.icon === 'b-talk'" class="logo-talk"><span class="talk-bubble">TALK</span></span>
        <svg v-else class="task-icon" :class="b.icon"><use :href="'#' + b.icon" /></svg>
      </div>
      <div class="tray">
        <svg width="17" height="10" viewBox="0 0 17 10"><path d="M1 9l7.500-8L16 9" fill="none" stroke="#fff" stroke-width="1.300" /></svg>
        <svg width="20" height="12" viewBox="0 0 20 12"><rect x="5" y="2" width="14" height="9" fill="#fff" stroke="#aaa" /><path d="M0 4h3M3 1v8M3 3h2M3 7h2" stroke="#fff" stroke-width="1.300" /></svg>
        <svg width="16" height="16" viewBox="0 0 16 16"><path d="M1 15C2 8 7 3 15 2M5 15c1-4 4-7 10-8M9 15c.5-2 2-3 4-3.500" fill="none" stroke="#ccc" stroke-width="1.100" /><circle cx="13" cy="14" r="1.500" fill="#fff" /></svg>
        <svg class="tray-speaker" width="20" height="16" viewBox="0 0 20 16"><path d="M1 5h3l5-4v14l-5-4H1z" fill="none" stroke="#fff" stroke-width="1.100" /><path d="M12 5c1.500 2 1.500 4 0 6M15 3c2 3 2 7 0 10" fill="none" stroke="#fff" /><path d="M18 1c2.500 4 2.500 10 0 14" fill="none" stroke="#666" /></svg>
        <svg width="18" height="18" viewBox="0 0 18 18"><circle cx="9" cy="9" r="9" fill="#8e8e8e" /><path d="M5.500 5.500l7 7M12.500 5.500l-7 7" stroke="#111" stroke-width="2.200" /></svg>
        <div class="clock"><span>오후 7:25</span><span>2018-02-07</span></div>
        <svg width="20" height="20" viewBox="0 0 20 20"><path d="M.5 1.500h19v15h-7l-2.500 2.500-2.500-2.500h-7z" fill="none" stroke="#fff" stroke-width="1.100" /></svg>
      </div>
    </nav>
  </div>
</template>

<style>
html,
body {
  margin: 0;
  overflow: hidden;
}
</style>

<style scoped>
.app {
  width: 1920px;
  height: 1080px;
  display: flex;
  flex-direction: column;
  position: relative;
  overflow: hidden;
  font-family: 'Liberation Sans', Arial, sans-serif;
  background: #ededed;
}

.defs {
  position: absolute;
  width: 0;
  height: 0;
}

.caret {
  display: inline-block;
  width: 0;
  height: 0;
  border-left: 4px solid transparent;
  border-right: 4px solid transparent;
  border-top: 6px solid #444;
}
.caret.light {
  border-top-color: #a4a4a4;
}
.caret.white {
  border-top-color: #f4f4f4;
  border-left-width: 3.5px;
  border-right-width: 3.5px;
  border-top-width: 5px;
  margin-left: 7px;
}

/* title bar */
.title-bar {
  height: 29px;
  flex: none;
  background: #fff;
  display: flex;
  align-items: center;
  padding-left: 2px;
}
.app-logo {
  width: 20px;
  height: 22px;
  background: #e7f2f7;
  color: #dd8630;
  font: 700 20px/22px 'Liberation Sans', sans-serif;
  text-align: center;
}
.app-name {
  margin-left: 5px;
  margin-bottom: 2px;
  font: 14.5px 'Noto Sans', 'Open Sans', sans-serif;
  color: #111;
}
.win-controls {
  margin-left: auto;
  margin-right: 25px;
  display: flex;
  gap: 45px;
}

/* quick access */
.quick-bar {
  height: 37px;
  flex: none;
  box-sizing: border-box;
  border-bottom: 2px solid #a9a9a9;
  background: #d8d8d8;
  display: flex;
  align-items: center;
  padding-left: 15px;
  filter: blur(0.35px);
}
.qb-doc { margin-left: 33px; }
.qb-c1 { margin-left: 7px; }
.qb-save { margin-left: 32px; }
.qb-undo { margin-left: 30px; }
.qb-c2 { margin-left: 10px; }
.qb-redo { margin-left: 17px; }
.qb-c3 { margin-left: 9px; }
.qb-right {
  margin-left: auto;
  display: flex;
  align-items: center;
  padding-right: 17px;
}
.user {
  margin-left: 36px;
  margin-top: 2px;
  font-size: 13px;
  color: #666;
}
.qb-c4 { margin-left: 7px; }
.help {
  width: 21px;
  height: 21px;
  margin-left: 30px;
  border-radius: 50%;
  background: #666;
  color: #ddd;
  font: 700 16px/21px 'Liberation Sans', sans-serif;
  text-align: center;
}
.qb-c5 { margin-left: 5px; }

/* tabs */
.tab-bar {
  height: 28px;
  flex: none;
  box-sizing: border-box;
  border-bottom: 2px solid #b2b2b2;
  background: #d8d8d8;
  display: flex;
  align-items: center;
  filter: blur(0.35px);
}
.tab {
  width: 248px;
  height: 26px;
  box-sizing: border-box;
  border-right: 2px solid #a9a9a9;
  background: #ececec;
  display: flex;
  align-items: center;
  padding-left: 12px;
}
.tab-name {
  margin-left: 12px;
  font-size: 14px;
  font-weight: 700;
  color: #777;
  padding-top: 7px;
}
.tab-close {
  margin-left: auto;
  margin-right: 9px;
}
.tab-plus {
  margin-left: 10px;
}

/* canvas */
.canvas {
  flex: 1;
  position: relative;
  background: #ededed;
  filter: blur(0.35px);
}
.scene {
  position: absolute;
  inset: 0;
}
.cube-left {
  font: 700 15px 'Liberation Sans', sans-serif;
  fill: #94979d;
}
.axis {
  font: 700 17px 'Liberation Sans', sans-serif;
}

/* ribbon */
.ribbon {
  position: absolute;
  top: 5px;
  left: 5px;
  height: 75px;
  display: flex;
  background: #d9d9d9;
}
.model-btn {
  width: 133px;
  background: #a9a9a9;
  display: flex;
  align-items: center;
  padding: 2px 0 0 43px;
  box-sizing: border-box;
  color: #f4f4f4;
  font-size: 13px;
  font-weight: 700;
  position: relative;
}
.grip {
  position: absolute;
  left: 7px;
  top: 22px;
  width: 3px;
  height: 30px;
  border-left: 1px solid #8d8d8d;
  border-right: 1px solid #8d8d8d;
}
.rb-group {
  box-sizing: border-box;
  display: flex;
  flex-direction: column;
  align-items: center;
  position: relative;
}
.rb-group::after {
  content: '';
  position: absolute;
  right: 0;
  top: 5px;
  bottom: 4px;
  width: 1px;
  background: #c5c5c5;
}
.rb-group.last {
  width: 88px;
}
.rb-group.last::after {
  display: none;
}
.rb-icons {
  margin-top: 9px;
  height: 40px;
  display: flex;
  gap: 14px;
}
.rb-icons.select {
  margin-top: 5px;
  height: 44px;
}
.rb-icon {
  width: 40px;
  height: 40px;
}
.rb-select {
  width: 50px;
  height: 49px;
}
.rb-label {
  position: absolute;
  top: 59px;
  white-space: nowrap;
  font-size: 13px;
  line-height: 14px;
  letter-spacing: -0.2px;
  color: #666;
}
.rb-label .caret {
  margin-left: 3px;
  vertical-align: 2px;
  border-left-width: 3.5px;
  border-right-width: 3.5px;
  border-top-width: 5px;
  border-top-color: #555;
}

/* panels */
.panel {
  position: absolute;
  left: 5px;
  width: 375px;
  height: 30px;
  box-sizing: border-box;
  border: 1px solid #a9a9a9;
  background: #d0d0d0;
  display: flex;
  align-items: center;
  padding-left: 6px;
}
.browser {
  top: 86px;
  border-radius: 2px 2px 0 0;
}
.comments {
  top: 838px;
  padding-left: 33px;
}
.browser .panel-name {
  margin-left: 15px;
}
.panel-name {
  font-size: 12.5px;
  color: #707070;
}
.panel-btn {
  margin-left: auto;
  width: 12px;
  height: 12px;
  border-radius: 50%;
  background: #333;
  color: #eee;
  font: 700 12px/12px 'Liberation Sans', sans-serif;
  text-align: center;
}
.panel-grip {
  width: 3px;
  height: 20px;
  margin: 0 0 0 9px;
  border-left: 1px solid #999;
  border-right: 1px solid #999;
}

/* browser tree */
.tree {
  position: absolute;
  left: 26px;
  top: 123px;
  display: flex;
  flex-direction: column;
  gap: 5px;
}
.row {
  height: 25px;
  display: flex;
  align-items: center;
}
.row > .arrow {
  width: 14px;
  margin-right: 10px;
}
.arrow-slot {
  width: 24px;
  flex: none;
}
.arrow-slot .arrow {
  display: block;
}
.chip {
  height: 25px;
  background: #cbcbcb;
  display: flex;
  align-items: center;
}
.chip.has-bulb {
  padding-left: 3px;
}
.bulb {
  width: 20px;
  height: 24px;
  margin-right: 8px;
  flex: none;
}
.chip-main {
  height: 100%;
  display: flex;
  align-items: center;
  padding: 0 12px 0 4px;
}
.chip-main.selected {
  background: #6493bd;
}
.chip-main.selected .node-name {
  color: #fff;
}
.node-icon {
  width: 20px;
  height: 20px;
  flex: none;
}
.node-name {
  margin-left: 17px;
  font-size: 13.5px;
  color: #5f5f5f;
  white-space: nowrap;
}
.chip.root {
  width: 185px;
}
.root-dark {
  width: 152px;
  height: 21px;
  margin-left: 2px;
  background: #808080;
  box-sizing: border-box;
  padding-left: 1px;
  display: flex;
  align-items: center;
}
.root-dark .node-icon {
  margin-left: 3px;
}
.root-name {
  margin-left: 18px;
  font-size: 13.5px;
  font-weight: 700;
  color: #f2f2f2;
}
.radio {
  margin-left: 5px;
}

/* view controls */
.nav-bar {
  position: absolute;
  left: 806px;
  top: 839px;
  display: flex;
  gap: 10px;
}
.nav-group {
  height: 30px;
  background: #c9c9c9;
  display: flex;
  align-items: center;
}
.nav-group.first {
  width: 180px;
  padding-left: 2px;
  gap: 9px;
  box-sizing: border-box;
}
.nav-look {
  margin-left: -2px;
  margin-right: 3px;
}
.nav-group.second {
  width: 115px;
  padding-left: 4px;
  gap: 7px;
  box-sizing: border-box;
}
.nav-group .caret {
  border-left-width: 3.5px;
  border-right-width: 3.5px;
  border-top-width: 5px;
  margin-left: -3px;
}

/* timeline */
.timeline {
  height: 62px;
  flex: none;
  background: #cccccc;
  display: flex;
  align-items: flex-start;
  padding-top: 16px;
  box-sizing: border-box;
  filter: blur(0.35px);
}
.tl-controls {
  height: 30px;
  padding-left: 6px;
  width: 157px;
  box-sizing: content-box;
  margin-right: 15px;
  flex: none;
  display: flex;
  align-items: center;
}
.tl-btn {
  width: 31px;
  height: 18px;
  flex: none;
}
.tl-track {
  position: relative;
  display: flex;
  height: 37px;
  align-items: flex-start;
}
.tl-item {
  width: 30px;
  height: 30px;
  display: flex;
  align-items: center;
  justify-content: center;
  position: relative;
}
.tl-item::after {
  content: '';
  position: absolute;
  left: 14px;
  top: 30px;
  width: 1px;
  height: 6px;
  background: #666;
}
.tl-item.red {
  background: #ee4a4a;
  border-radius: 3px;
}
.tl-item.yellow {
  background: #e4e426;
}
.tl-item.ghost .tl-icon {
  opacity: 0.3;
}
.tl-icon {
  width: 21px;
  height: 21px;
}
.tl-rail {
  position: absolute;
  left: 15px;
  right: 14px;
  top: 36px;
  height: 2px;
  background: #666;
}
.tl-marker {
  position: absolute;
  left: 651px;
  top: -2px;
  border-left: 8px solid transparent;
  border-right: 8px solid transparent;
  border-top: 11px solid #666;
}
.tl-marker::after {
  content: '';
  position: absolute;
  left: -1px;
  top: -1px;
  width: 2px;
  height: 28px;
  background: #666;
}
.tl-gear {
  margin-left: auto;
  margin-right: 11px;
  margin-top: 5px;
}

/* taskbar */
.taskbar {
  height: 50px;
  flex: none;
  background: #07080e;
  display: flex;
  align-items: stretch;
}
.task-btn {
  width: 61.6px;
  position: relative;
  display: flex;
  align-items: center;
  justify-content: center;
}
.task-btn.open::after {
  content: '';
  position: absolute;
  left: 5px;
  right: 5px;
  bottom: 0;
  height: 3px;
  background: #76b9ed;
}
.task-btn.active {
  background: #34363b;
}
.task-btn.active::after {
  left: 0;
  right: 0;
}
.task-icon {
  width: 26px;
  height: 26px;
  margin-top: -3px;
}
.task-icon.b-win {
  width: 22px;
  height: 22px;
}
.task-icon.b-search {
  width: 22px;
  height: 22px;
}
.task-icon.b-task {
  width: 24px;
  height: 22px;
  margin-left: -5px;
}
.task-icon.b-files,
.task-icon.b-store,
.task-icon.b-mail,
.task-icon.b-chrome,
.task-icon.b-paint {
  width: 30px;
  height: 30px;
}
.logo-edge {
  margin-top: -7px;
  margin-left: -2px;
  font: 700 42px/42px 'Liberation Sans', sans-serif;
  color: #0a78d7;
}
.logo-fusion {
  width: 30px;
  height: 30px;
  margin-top: -5px;
  margin-left: 2px;
  position: relative;
  background: #eef5f8;
  color: #dd8b35;
  font: 700 27px/30px 'Liberation Sans', sans-serif;
  text-align: center;
}
.logo-fusion small {
  position: absolute;
  right: 2px;
  bottom: 1px;
  font: 400 5px/6px 'Liberation Sans', sans-serif;
  color: #3a80b8;
}
.logo-talk {
  width: 30px;
  height: 30px;
  margin-top: -5px;
  background: #fee500;
  border-radius: 1px;
  display: flex;
  align-items: center;
  justify-content: center;
}
.talk-bubble {
  width: 27px;
  height: 21px;
  border-radius: 50%;
  background: #3a1d1d;
  color: #fee500;
  font: 700 8.5px/21px 'Liberation Sans', sans-serif;
  text-align: center;
}
.tray {
  margin-left: auto;
  display: flex;
  align-items: center;
  gap: 12px;
  padding-right: 31px;
  color: #e8e8e8;
}
.tray-speaker {
  margin-right: -2px;
}
.clock {
  width: 80px;
  display: flex;
  flex-direction: column;
  align-items: center;
  gap: 3px;
  margin: 0 11px 0 -3px;
  font: 13.5px/20px 'Noto Sans', 'Noto Sans CJK KR', sans-serif;
}
</style>
